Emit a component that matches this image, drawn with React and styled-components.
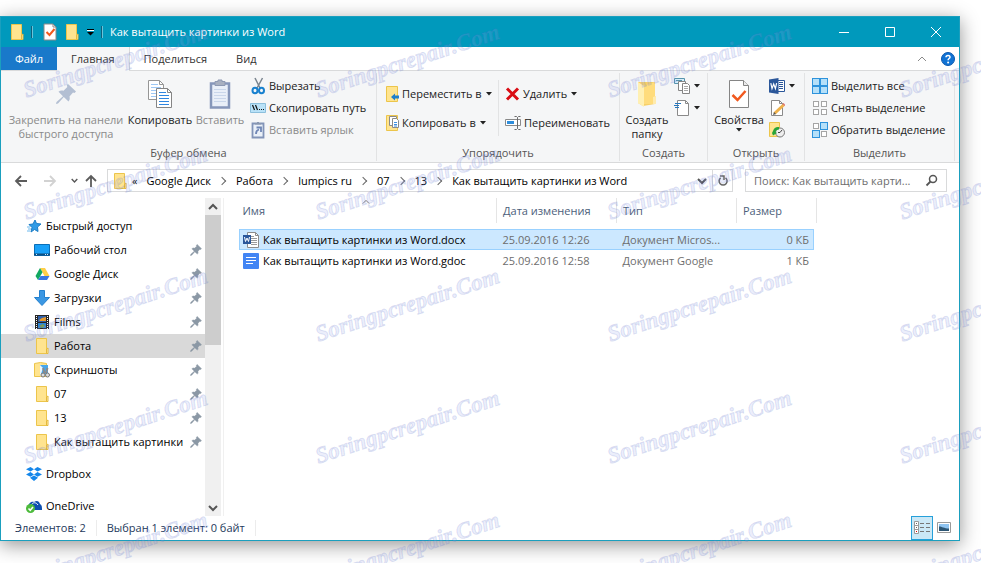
import React, { useState } from 'react';
import styled, { createGlobalStyle } from 'styled-components';

const COLORS = {
  Accent: '#0099bc',
  File: '#1979ca',
  Ribbon: '#f5f6f7',
  Line: '#d9dadb',
  Text: '#222',
  Muted: '#8a8a8a',
  Header: '#4c607a',
  Grey: '#6d6d6d',
  Status: '#1e395b',
  Selected: '#cce8ff',
  SelectedBorder: '#99d1ff',
};

const GlobalStyle = createGlobalStyle`
  * {
    box-sizing: border-box;
  }

  body {
    margin: 0;
    background: #fff;
    font-family: 'Open Sans', 'Noto Sans', sans-serif;
    font-size: 11px;
    line-height: 16px;
    color: ${COLORS.Text};
  }

  button,
  input {
    font: inherit;
    color: inherit;
    border: 0;
    background: none;
    padding: 0;
    margin: 0;
  }

  svg {
    display: block;
    flex: none;
  }
`;

const Desktop = styled.div`
  position: relative;
  display: flex;
  min-height: 100vh;
  padding: 16px 21px 22px 0;
  overflow: hidden;
`;

const Window = styled.div`
  flex: 1;
  min-width: 0;
  display: flex;
  flex-direction: column;
  background: #fff;
  border: 1px solid #1a9fbe;
  box-shadow: 0 4px 18px rgba(0, 0, 0, 0.42);
`;

const TitleBar = styled.header`
  display: flex;
  align-items: center;
  height: 30px;
  padding-left: 8px;
  background: ${COLORS.Accent};
  color: #fff;
`;

const QuickTools = styled.div`
  display: flex;
  align-items: center;
  gap: 6px;
  margin-right: 4px;
`;

const QuickButton = styled.button`
  display: flex;
`;

const QuickDivider = styled.span`
  width: 1px;
  height: 12px;
  margin-right: 4px;
  background: #0b5f7c;
  box-shadow: 1px 0 0 #6cc3d8;
`;

const Title = styled.h1`
  flex: 1;
  margin: 0;
  font-size: 11px;
  font-weight: 400;
`;

const WindowButton = styled.button`
  display: flex;
  align-items: center;
  justify-content: center;
  width: 46px;
  height: 30px;
`;

const TabBar = styled.nav`
  display: flex;
  align-items: stretch;
  height: 24px;
  border-bottom: 1px solid ${COLORS.Line};
`;

const FileTab = styled.button`
  width: 56px;
  height: 23px;
  background: ${COLORS.File};
  color: #fff;
`;

const Tab = styled.button`
  height: 24px;
  padding: 0 14px;
  color: #333;
  border-right: 1px solid ${({ $active }) => ($active ? COLORS.Line : 'transparent')};
  background: ${({ $active }) => ($active ? COLORS.Ribbon : 'none')};
`;

const TabTools = styled.div`
  display: flex;
  align-items: center;
  gap: 14px;
  margin-left: auto;
  padding-right: 4px;
`;

const Ribbon = styled.div`
  display: flex;
  height: 92px;
  padding: 2px 0 1px;
  background: ${COLORS.Ribbon};
  border-bottom: 1px solid ${COLORS.Line};
`;

const Group = styled.section`
  display: flex;
  flex-direction: column;
  justify-content: space-between;
  flex: 0 0 ${({ $width }) => $width}px;
  border-right: 1px solid #e2e3e4;
`;

const GroupBody = styled.div`
  display: flex;
  padding: 2px 0 0 ${({ $inset }) => $inset || 4}px;
`;

const GroupTitle = styled.h2`
  margin: 0;
  font-size: 11px;
  font-weight: 400;
  text-align: center;
  color: #555;
`;

const BigButton = styled.button`
  display: flex;
  flex-direction: column;
  align-items: center;
  width: ${({ $width }) => $width}px;
  line-height: 14px;
  white-space: nowrap;
  color: ${({ disabled }) => (disabled ? COLORS.Muted : COLORS.Text)};
`;

const BigIcon = styled.span`
  display: flex;
  align-items: center;
  justify-content: center;
  height: 38px;
`;

const Commands = styled.div`
  display: flex;
  flex-direction: column;
  justify-content: ${({ $spaced }) => ($spaced ? 'center' : 'flex-start')};
  gap: ${({ $spaced }) => ($spaced ? 7 : 0)}px;
  height: 66px;
  min-width: ${({ $width }) => $width || 0}px;
  padding: 0 ${({ $padding }) => $padding || 0}px;
`;

const Command = styled.button`
  display: flex;
  align-items: center;
  gap: 3px;
  height: 22px;
  white-space: nowrap;
  color: ${({ disabled }) => (disabled ? COLORS.Muted : COLORS.Text)};
`;

const InnerDivider = styled.span`
  width: 1px;
  height: 56px;
  margin-top: 5px;
  background: #e2e3e4;
`;

const AddressRow = styled.div`
  display: flex;
  align-items: center;
  height: 35px;
  padding: 0 12px 0 11px;
`;

const NavButton = styled.button`
  display: flex;
  align-items: center;
  justify-content: center;
  width: ${({ $width }) => $width}px;
  height: 22px;
`;

const AddressBox = styled.div`
  flex: 1;
  display: flex;
  align-items: center;
  height: 23px;
  margin-left: 3px;
  padding-left: 4px;
  border: 1px solid ${COLORS.Line};
  color: #000;
`;

const Crumbs = styled.ol`
  flex: 1;
  display: flex;
  align-items: center;
  margin: 0;
  padding: 0 0 0 4px;
  list-style: none;
`;

const Crumb = styled.li`
  display: flex;
  align-items: center;

  &:first-child {
    margin-right: 9px;
  }

  &:nth-child(n + 3)::before {
    content: '';
    width: 5px;
    height: 5px;
    margin: 0 11px 0 8px;
    border: solid #666;
    border-width: 1px 1px 0 0;
    transform: rotate(45deg);
  }
`;

const CrumbLink = styled.a`
  color: inherit;
  text-decoration: none;
`;

const RefreshButton = styled(NavButton)`
  border-left: 1px solid ${COLORS.Line};
`;

const SearchBox = styled.label`
  display: flex;
  align-items: center;
  width: 202px;
  height: 23px;
  margin-left: 12px;
  padding: 0 8px;
  border: 1px solid ${COLORS.Line};
`;

const SearchInput = styled.input`
  flex: 1;
  min-width: 0;
  text-overflow: ellipsis;
  outline: none;

  &::placeholder {
    color: ${COLORS.Grey};
    opacity: 1;
  }
`;

const Content = styled.div`
  flex: 1;
  display: flex;
  min-height: 200px;
`;

const Sidebar = styled.nav`
  width: 204px;
  height: 0;
  min-height: 100%;
  padding-top: 16px;
  overflow: hidden;
  color: #000;
`;

const Tree = styled.ul`
  margin: 0 0 8px;
  padding: 0;
  list-style: none;
`;

const TreeItem = styled.a`
  display: flex;
  align-items: center;
  gap: 3px;
  height: 24px;
  padding: 0 3px 0 ${({ $level }) => ($level ? 32 : 24)}px;
  white-space: nowrap;
  color: inherit;
  text-decoration: none;
  background: ${({ $current }) => ($current ? '#d9d9d9' : 'none')};
`;

const TreeLabel = styled.span`
  flex: 1;
`;

const ScrollTrack = styled.div`
  display: flex;
  flex-direction: column;
  width: 16px;
  background: #f0f0f0;
`;

const ScrollButton = styled.button`
  display: flex;
  align-items: center;
  justify-content: center;
  height: 17px;
`;

const ScrollThumb = styled.div`
  height: 130px;
  margin-bottom: auto;
  background: #cdcdcd;
`;

const Files = styled.main`
  flex: 1;
  margin-left: 2px;
  padding-left: 15px;
  border-left: 1px solid #f0f0f0;
`;

const FileTable = styled.table`
  width: 577px;
  table-layout: fixed;
  border-collapse: collapse;
`;

const HeadCell = styled.th`
  height: 25px;
  padding: 0 6px 0 ${({ $sorted }) => ($sorted ? 3 : 6)}px;
  font-weight: 400;
  text-align: left;
  color: ${COLORS.Header};
  border-right: 1px solid #e5e5e5;
`;

const HeadInner = styled.span`
  display: grid;
  grid-template-columns: 1fr 8px 1fr;
  align-items: center;
  height: 25px;

  svg {
    align-self: start;
  }
`;

const GapRow = styled.tr`
  height: 6px;
`;

const FileRow = styled.tr`
  height: 21px;
  cursor: default;
`;

const Cell = styled.td`
  height: 21px;
  padding: 0 6px;
  overflow: hidden;
  white-space: nowrap;
  text-overflow: ellipsis;
  text-align: ${({ $right }) => ($right ? 'right' : 'left')};
  color: ${COLORS.Grey};
  background: ${({ $selected }) => ($selected ? COLORS.Selected : 'none')};
  box-shadow: ${({ $selected }) =>
    $selected
      ? `inset 0 1px 0 ${COLORS.SelectedBorder}, inset 0 -1px 0 ${COLORS.SelectedBorder}`
      : 'none'};

  &:first-child {
    padding: 0 3px;
    border-left: 1px solid ${({ $selected }) => ($selected ? COLORS.SelectedBorder : 'transparent')};
  }

  &:last-child {
    padding: 0 4px;
    border-right: 1px solid ${({ $selected }) => ($selected ? COLORS.SelectedBorder : 'transparent')};
  }
`;

const FileName = styled.span`
  display: flex;
  align-items: center;
  gap: 4px;
  color: #000;
`;

const StatusBar = styled.footer`
  display: flex;
  align-items: center;
  height: 24px;
  padding: 0 4px;
  color: ${COLORS.Status};
`;

const StatusText = styled.span`
  padding: 0 10px;
  border-right: 1px solid #ececec;
`;

const ViewButtons = styled.div`
  display: flex;
  margin-left: auto;
`;

const ViewButton = styled.button`
  display: flex;
  align-items: center;
  justify-content: center;
  width: 22px;
  height: 24px;
  border: 1px solid ${({ $active }) => ($active ? '#26a0da' : 'transparent')};
  background: ${({ $active }) => ($active ? '#cbe8f6' : 'none')};
`;

const Stamps = styled.div`
  position: absolute;
  inset: 0;
  display: grid;
  grid-template-columns: repeat(4, 292px);
  grid-auto-rows: 122px;
  padding: 91px 0 0 24px;
  overflow: hidden;
  pointer-events: none;
`;

const Stamp = styled.span`
  height: 0;
  font: italic 700 23px/0 'Liberation Serif', serif;
  white-space: nowrap;
  color: rgba(150, 165, 235, 0.2);
  -webkit-text-stroke: 1px rgba(80, 100, 190, 0.17);
  transform: rotate(-18deg);
  transform-origin: 0 0;
`;

const FolderIcon = () => (
  <svg width="16" height="18" viewBox="0 0 16 18">
    <path d="M2.500 1.500h10v12h1v3h-11z" fill="#ffe48f" stroke="#ecc54b" />
    <path d="M12.500 12l1.500-1v5.500h-1.500z" fill="#fff0b5" stroke="#e5b93c" />
  </svg>
);

const TaskIcon = () => (
  <svg width="16" height="18" viewBox="0 0 16 18">
    <path d="M2 1h9l3 3v13H2z" fill="#fff" stroke="#8a8a8a" />
    <path d="M11 1v3h3" fill="none" stroke="#8a8a8a" />
    <path d="M4.500 9l3 3 5-6" fill="none" stroke="#f15a1e" strokeWidth="2" />
  </svg>
);

const QuickMenuIcon = () => (
  <svg width="9" height="10" viewBox="0 0 9 10">
    <path d="M1 2h7v1H1z" fill="#000" />
    <path d="M1 3h7v1H1z" fill="#fff" />
    <path d="M1 5h7L4.500 8.500z" fill="#000" />
  </svg>
);

const Caret = () => (
  <svg width="8" height="6" viewBox="0 0 8 6">
    <path d="M1 1h6L4 4.500z" fill="#222" />
  </svg>
);

const Chevron = ({ up, size = 10, color = '#555', weight = 1 }) => (
  <svg width={size} height={size} viewBox="0 0 10 10">
    <path d={up ? 'M1 7l4-4 4 4' : 'M1 3l4 4 4-4'} fill="none" stroke={color} strokeWidth={weight} />
  </svg>
);

const HelpIcon = () => (
  <svg width="14" height="14" viewBox="0 0 14 14">
    <circle cx="7" cy="7" r="6.500" fill="#1173d4" stroke="#0a57ad" />
    <path d="M5 5.300C5 2.700 9.200 2.800 9 5.200 8.900 6.600 7.100 6.500 7.100 8.300" fill="none" stroke="#fff" strokeWidth="1.500" />
    <circle cx="7.100" cy="10.400" r="1" fill="#fff" />
  </svg>
);

const BigPinIcon = () => (
  <svg width="22" height="22" viewBox="0 0 22 22">
    <path
      d="M13 1l8 7.500-1.500 1.500-1.500-.5-3.500 4c.5 2 .3 3.500-1 5L8.800 14 3 20.500 1 21l.5-2L8 13.200 3.500 8.700c1.500-1.300 3-1.500 5-1L12.300 4 11.800 2.200z"
      fill="#b3bfd3"
    />
  </svg>
);

const PinIcon = () => (
  <svg width="12" height="12" viewBox="0 0 22 22">
    <path
      d="M13 1l8 7.500-1.500 1.500-1.500-.5-3.500 4c.5 2 .3 3.500-1 5L8.800 14 3 20.500 1 21l.5-2L8 13.200 3.500 8.700c1.500-1.300 3-1.500 5-1L12.300 4 11.800 2.200z"
      fill="#8b98a5"
      stroke="#8b98a5"
    />
  </svg>
);

const CopyIcon = () => (
  <svg width="26" height="30" viewBox="0 0 26 30">
    <path d="M1.500 1.500h11l4 4v15h-15z" fill="#fff" stroke="#969696" />
    <path d="M12.500 1.500v4h4" fill="none" stroke="#969696" />
    <path d="M4 5.500h7M4 8.500h10M4 11.500h10M4 14.500h10M4 17.500h10" stroke="#9ec8f5" />
    <path d="M9.500 9.500h11l4 4v15h-15z" fill="#fff" stroke="#858585" />
    <path d="M20.500 9.500v4h4" fill="none" stroke="#858585" />
    <path d="M12 13.500h7M12 16.500h10M12 19.500h10M12 22.500h10M12 25.500h10" stroke="#2f86e0" />
  </svg>
);

const PasteIcon = () => (
  <svg width="22" height="30" viewBox="0 0 22 30">
    <path d="M2 4.500h18v24H2z" fill="#e9eff8" stroke="#8697ba" strokeWidth="2.500" />
    <path d="M5 10.500h12M5 13.500h12M5 16.500h12M5 19.500h12M5 22.500h12" stroke="#c9d6ea" />
    <path d="M6 6.500v-4h3V1h4v1.500h3v4z" fill="#a8b0c0" stroke="#8d99b3" />
  </svg>
);

const CutIcon = () => (
  <svg width="16" height="18" viewBox="0 0 16 18">
    <path d="M5 1l5.500 11M12.500 1L6.500 12" stroke="#7a858f" strokeWidth="1.500" fill="none" />
    <ellipse cx="5" cy="13.500" rx="2.500" ry="2.800" fill="none" stroke="#1881cf" strokeWidth="2" />
    <ellipse cx="11.500" cy="13.500" rx="2.500" ry="2.800" fill="none" stroke="#1881cf" strokeWidth="2" />
  </svg>
);

const PathIcon = () => (
  <svg width="16" height="16" viewBox="0 0 16 16">
    <path d="M.5 3.500h15v9H.5z" fill="#b9e2f8" stroke="#8cbfdc" />
    <path d="M2.500 5l2 5M5.500 5l2 5M9 9.500h1M11 9.500h1M13 9.500h1" stroke="#111" strokeWidth="1.200" />
  </svg>
);

const ShortcutIcon = () => (
  <svg width="16" height="18" viewBox="0 0 16 18">
    <path d="M2.500 2.500h11v14h-11z" fill="#eaf0f8" stroke="#8294b8" strokeWidth="1.800" />
    <path d="M5 3.500V2h2V1h2v1h2v1.500z" fill="#8997b0" />
    <path d="M6 13c0-2.500 1-4 3-4.500M6.500 6.500H11V11" fill="none" stroke="#6f86b5" strokeWidth="1.800" />
  </svg>
);

const MoveIcon = () => (
  <svg width="14" height="18" viewBox="0 0 14 18">
    <path d="M1.500 1.500h11v15h-11z" fill="#ffe48f" stroke="#ecc54b" />
    <path d="M6 12l4-3.500v2h4v3h-4v2z" fill="#1f7fcb" />
  </svg>
);

const CopyToIcon = () => (
  <svg width="14" height="18" viewBox="0 0 14 18">
    <path d="M1.500 1.500h11v15h-11z" fill="#ffe48f" stroke="#ecc54b" />
    <path d="M4.500 2.500h7v9h-7z" fill="#fff" stroke="#8a8a8a" />
    <path d="M7.500 4.500h4l2 2v7h-6z" fill="#fff" stroke="#8a8a8a" />
    <path d="M9 8.500h3M9 10.500h3M9 12h3" stroke="#3f8fe0" />
  </svg>
);

const DeleteIcon = () => (
  <svg width="15" height="16" viewBox="0 0 15 16">
    <path d="M2 2.500l11 11M13 2.500L2 13.500" stroke="#d90d14" strokeWidth="3" />
  </svg>
);

const RenameIcon = () => (
  <svg width="16" height="16" viewBox="0 0 16 16">
    <path d="M.5 4.500h15v6H.5z" fill="#fff" stroke="#8a8a8a" />
    <path d="M2 6h7v3H2z" fill="#2e8ddb" />
    <path d="M9.500 1.500h2l1 1 1-1h2M12.500 2.500v11M9.500 14.500h2l1-1 1 1h2" fill="none" stroke="#6b6b6b" />
  </svg>
);

const NewFolderIcon = () => (
  <svg width="22" height="30" viewBox="0 0 22 30">
    <path d="M2 3h17v22l-12 2-5-3z" fill="#f7d067" />
    <path d="M2 3l6 4v21l-6-4z" fill="#fff0b3" />
    <path d="M8 7l11-4v14l1 1v7H8z" fill="#ffdc7c" />
    <path d="M17 18l3-1v8h-3z" fill="#ffebad" />
  </svg>
);

const NewItemIcon = () => (
  <svg width="16" height="18" viewBox="0 0 16 18">
    <path d="M.5 1.500h10v5h-10z" fill="#d5eefb" stroke="#5794ad" />
    <path d="M2 3.500h6" stroke="#5794ad" />
    <path d="M4.500 4.500h7v9h-7z" fill="#fff" stroke="#858585" />
    <path d="M8.500 6.500h5l2 2v8h-7z" fill="#fff" stroke="#858585" />
    <path d="M10 9.500h4M10 11.500h4M10 13.500h4" stroke="#a8a8a8" />
  </svg>
);

const EasyAccessIcon = () => (
  <svg width="16" height="18" viewBox="0 0 16 18">
    <path d="M3.500 1.500h8l3 3v12h-11z" fill="#fff" stroke="#8a8a8a" />
    <path d="M11.500 1.500v3h3" fill="none" stroke="#8a8a8a" />
    <path d="M1 4.500h6M0 6.500h5M1 8.500h4" stroke="#2677bd" />
  </svg>
);

const PropertiesIcon = () => (
  <svg width="22" height="30" viewBox="0 0 22 30">
    <path d="M1.500 1.500h14l5 5v22h-19z" fill="#fff" stroke="#858585" />
    <path d="M15.500 1.500v5h5" fill="#ececec" stroke="#858585" />
    <path d="M4.500 16l5 5 8-9" fill="none" stroke="#f1591f" strokeWidth="2.500" />
  </svg>
);

const WordIcon = () => (
  <svg width="16" height="16" viewBox="0 0 16 16">
    <path d="M8.500 2.500h7v11h-7z" fill="#fff" stroke="#2b579a" />
    <path d="M10 4.500h4M10 6.500h4M10 8.500h4M10 10.500h4" stroke="#2b579a" />
    <path d="M0 1.500L9.500 0v16L0 14.500z" fill="#2b579a" />
    <path d="M1.800 5.200l1.200 5.500 1.700-4.700 1.700 4.700 1.200-5.500" fill="none" stroke="#fff" strokeWidth="1.200" />
  </svg>
);

const EditIcon = () => (
  <svg width="16" height="18" viewBox="0 0 16 18">
    <path d="M2.500 1.500h8l3 3v12h-11z" fill="#fff" stroke="#8a8a8a" />
    <path d="M10.500 1.500v3h3" fill="none" stroke="#8a8a8a" />
    <path d="M5.500 14.500l9-8.500" stroke="#eeb14b" strokeWidth="3" />
    <path d="M4 16l1-3 2 2z" fill="#555" />
    <path d="M14 4.500l2 2" stroke="#dd6a62" strokeWidth="1.500" />
  </svg>
);

const HistoryIcon = () => (
  <svg width="16" height="18" viewBox="0 0 16 18">
    <path d="M.5 1.500h10v14H.5z" fill="#ffe48f" stroke="#ecc54b" />
    <circle cx="11" cy="11.500" r="4.500" fill="#eee" stroke="#777" />
    <path d="M11 11.500l2-2.500M11 11.500h-2" stroke="#444" />
    <path d="M3 12l1-2c1-3 3-4.500 6-4v2.500c-2 0-3 1-3.500 2.500l1.500 1-4 2.500z" fill="#28a536" />
  </svg>
);

const SelectIcon = ({ filled }) => (
  <svg width="16" height="16" viewBox="0 0 16 16">
    {[[0, 0], [8, 0], [0, 8], [8, 8]].map(([x, y], i) => {
      const on = filled.includes(i);
      return (
        <rect
          key={i}
          x={x + (on ? 0.5 : 1.5)}
          y={y + (on ? 0.5 : 1.5)}
          width={on ? 7 : 5}
          height={on ? 7 : 5}
          fill={on ? '#b5e0f9' : '#fff'}
          stroke={on ? '#2e93dc' : '#a5a5a5'}
        />
      );
    })}
  </svg>
);

const ArrowIcon = ({ rotate = 0, color = '#5c5c5c' }) => (
  <svg width="14" height="14" viewBox="0 0 14 14">
    <path d="M13 7H2M7 2L2 7l5 5" fill="none" stroke={color} strokeWidth="1.800" transform={`rotate(${rotate} 7 7)`} />
  </svg>
);

const RefreshIcon = () => (
  <svg width="12" height="12" viewBox="0 0 12 12">
    <path d="M8.500 2.800a4 4 0 1 1-4.800 0" fill="none" stroke="#666" strokeWidth="1.500" />
    <path d="M3 1h4v4" fill="none" stroke="#666" strokeWidth="1.500" />
  </svg>
);

const SearchIcon = () => (
  <svg width="13" height="13" viewBox="0 0 13 13">
    <circle cx="8" cy="5" r="3.500" fill="none" stroke="#555" strokeWidth="1.500" />
    <path d="M5.500 7.500l-4 4" stroke="#555" strokeWidth="1.800" />
  </svg>
);

const StarIcon = () => (
  <svg width="18" height="16" viewBox="0 0 18 16">
    <path d="M10 2l1.500 3.500 4.500.5-3.500 3 .5 4.500-3.500-2L6 14l1-4.500L4 6.500l4-.5z" fill="#2f9be6" stroke="#1b7dc6" />
    <path d="M2 9h3M3 11h3M2 13h3" stroke="#6db9ee" />
  </svg>
);

const DesktopIcon = () => (
  <svg width="18" height="16" viewBox="0 0 18 16">
    <path d="M1.500 2.500h15v11h-15z" fill="#18a0f8" stroke="#0a6fb8" />
    <path d="M1 12.500h16" stroke="#0c4f82" strokeWidth="2" />
    <path d="M3 12.500h1M12 12.500h1M14 12.500h1" stroke="#cfeaff" />
  </svg>
);

const DriveIcon = () => (
  <svg width="18" height="16" viewBox="0 0 18 16">
    <path d="M7 2h5l4.500 8h-5z" fill="#ffcf48" />
    <path d="M7 2l2.500 4.300L5 14l-2.500-4z" fill="#11a861" />
    <path d="M7.500 10h9L14 14H5z" fill="#3777e3" />
  </svg>
);

const DownloadIcon = () => (
  <svg width="18" height="18" viewBox="0 0 18 18">
    <path d="M6.500 1.500h5v7h5L9 16.500 1.500 8.500h5z" fill="#3b97e3" stroke="#2380ce" />
  </svg>
);

const FilmIcon = () => (
  <svg width="18" height="16" viewBox="0 0 18 16">
    <path d="M2 1h14v14H2z" fill="#252525" />
    <path d="M5 2h8v6H5z" fill="#2f5fa8" />
    <path d="M5 9h8v5H5z" fill="#2d86d8" />
    <path d="M6 6l3-2 4-1v4H7z" fill="#e79a2d" />
    <path d="M6 12l4-2 2 2-3 2z" fill="#7fa13c" />
    <path d="M3.500 2v13M14.500 2v13" stroke="#fff" strokeDasharray="1 1" />
  </svg>
);

const ScreenshotsIcon = () => (
  <svg width="18" height="18" viewBox="0 0 18 18">
    <path d="M1.500 2.500l6-1 6 1v13h-12z" fill="#ffe48f" stroke="#ecc54b" />
    <path d="M7 4h8v9H7z" fill="#49a7ea" />
    <path d="M7 4l3 3-3 9z" fill="#e9f5fd" />
    <path d="M10 7l1.500 5M14.500 7L13 12" stroke="#8a8a8a" strokeWidth="2" />
    <circle cx="10" cy="14" r="2" fill="#ddd" stroke="#777" />
    <circle cx="14.500" cy="14" r="2" fill="#ddd" stroke="#777" />
  </svg>
);

const DropboxIcon = () => (
  <svg width="18" height="16" viewBox="0 0 18 16">
    <path
      d="M5.500 1L9 3.300 5.500 5.600 1 3.300zM12.500 1L17 3.300l-4.500 2.300L9 3.300zM5.500 6.100L9 8.400l-3.500 2.300L1 8.400zM12.500 6.100L17 8.400l-4.500 2.300L9 8.400zM5 11.800L9 9.600l4 2.200L9 15z"
      fill="#1486ea"
    />
  </svg>
);

const OneDriveIcon = () => (
  <svg width="18" height="16" viewBox="0 0 18 16">
    <path d="M3 10c0-4 3-7 6-6 3-2 5-1 6 2 2 1 2 3 2 6H6z" fill="#0d4fb0" />
    <path d="M6 7c2-3 5-3 7 0" fill="none" stroke="#fff" />
    <circle cx="5.500" cy="10.500" r="4.500" fill="#4dbb3c" />
    <path d="M3.500 10.500l1.700 1.800 2.800-3.300" fill="none" stroke="#fff" strokeWidth="1.500" />
  </svg>
);

const DocxIcon = () => (
  <svg width="16" height="16" viewBox="0 0 16 16">
    <path d="M4.500.5h8l3 3v12h-11z" fill="#fff" stroke="#8c8c8c" />
    <path d="M12.500.5v3h3" fill="none" stroke="#8c8c8c" />
    <path d="M8 4.500h3M8 6.500h6M8 8.500h6M8 10.500h6M8 12.500h6" stroke="#9a9a9a" />
    <path d="M0 3h8v9H0z" fill="#2b579a" />
    <path d="M1.500 5l1 4.500L4 6l1.500 3.500 1-4.500" fill="none" stroke="#fff" />
  </svg>
);

const GdocIcon = () => (
  <svg width="16" height="16" viewBox="0 0 16 16">
    <rect width="16" height="16" rx="1" fill="#4285f4" />
    <path d="M3 4.500h10M3 7.500h10M3 10.500h7" stroke="#fff" />
  </svg>
);

const DetailsIcon = () => (
  <svg width="16" height="14" viewBox="0 0 16 14">
    <path d="M.5.500h4v12h-4zM.5 4.500h4M.5 8.500h4" fill="#fff" stroke="#9a9a9a" />
    <path d="M2 2.500h1M2 6.500h1" stroke="#666" />
    <path d="M2 10.500h1" stroke="#d00" />
    <path d="M6 2.500h4M12 2.500h4M6 6.500h4M12 6.500h4M6 10.500h4M12 10.500h4" stroke="#777" />
  </svg>
);

const ThumbnailsIcon = () => (
  <svg width="14" height="12" viewBox="0 0 14 12">
    <path d="M.5.500h13v10H.5z" fill="#fff" stroke="#9a9a9a" />
    <path d="M2 2h10v7H2z" fill="#8fc4f1" />
    <path d="M2 4.500c3 0 5 2 10 2V9H2z" fill="#2d5674" />
  </svg>
);

const crumbs = ['Google Диск', 'Работа', 'lumpics ru', '07', '13', 'Как вытащить картинки из Word'];

const quickAccess = [
  { name: 'Рабочий стол', Icon: DesktopIcon },
  { name: 'Google Диск', Icon: DriveIcon },
  { name: 'Загрузки', Icon: DownloadIcon },
  { name: 'Films', Icon: FilmIcon },
  { name: 'Работа', Icon: FolderIcon, current: true },
  { name: 'Скриншоты', Icon: ScreenshotsIcon },
  { name: '07', Icon: FolderIcon },
  { name: '13', Icon: FolderIcon },
  { name: 'Как вытащить картинки', Icon: FolderIcon },
];

const files = [
  { name: 'Как вытащить картинки из Word.docx', date: '25.09.2016 12:26', type: 'Документ Micros...', size: '0 КБ', Icon: DocxIcon },
  { name: 'Как вытащить картинки из Word.gdoc', date: '25.09.2016 12:58', type: 'Документ Google', size: '1 КБ', Icon: GdocIcon },
];

const IconSlot = styled.span`
  display: flex;
  flex: none;
  justify-content: center;
  width: 18px;
`;

const RibbonPanel = () => (
  <Ribbon>
    <Group $width={376}>
      <GroupBody>
        <BigButton $width={122} disabled>
          <BigIcon><BigPinIcon /></BigIcon>
          Закрепить на панели
          <br />
          быстрого доступа
        </BigButton>
        <BigButton $width={66}>
          <BigIcon><CopyIcon /></BigIcon>
          Копировать
        </BigButton>
        <BigButton $width={54} disabled>
          <BigIcon><PasteIcon /></BigIcon>
          Вставить
        </BigButton>
        <Commands $padding={3}>
          <Command><CutIcon />Вырезать</Command>
          <Command><PathIcon />Скопировать путь</Command>
          <Command disabled><ShortcutIcon />Вставить ярлык</Command>
        </Commands>
      </GroupBody>
      <GroupTitle>Буфер обмена</GroupTitle>
    </Group>

    <Group $width={243}>
      <GroupBody $inset={8}>
        <Commands $spaced $width={113}>
          <Command><MoveIcon />Переместить в <Caret /></Command>
          <Command><CopyToIcon />Копировать в <Caret /></Command>
        </Commands>
        <InnerDivider />
        <Commands $spaced $padding={6}>
          <Command><DeleteIcon />Удалить <Caret /></Command>
          <Command><RenameIcon />Переименовать</Command>
        </Commands>
      </GroupBody>
      <GroupTitle>Упорядочить</GroupTitle>
    </Group>

    <Group $width={88}>
      <GroupBody>
        <BigButton $width={46}>
          <BigIcon><NewFolderIcon /></BigIcon>
          Создать
          <br />
          папку
        </BigButton>
        <Commands $padding={4}>
          <Command aria-label="Создать элемент"><NewItemIcon /><Caret /></Command>
          <Command aria-label="Простой доступ"><EasyAccessIcon /><Caret /></Command>
        </Commands>
      </GroupBody>
      <GroupTitle>Создать</GroupTitle>
    </Group>

    <Group $width={97}>
      <GroupBody>
        <BigButton $width={54}>
          <BigIcon><PropertiesIcon /></BigIcon>
          Свойства
          <Caret />
        </BigButton>
        <Commands $padding={3}>
          <Command aria-label="Открыть"><WordIcon /><Caret /></Command>
          <Command aria-label="Изменить"><EditIcon /></Command>
          <Command aria-label="Журнал"><HistoryIcon /></Command>
        </Commands>
      </GroupBody>
      <GroupTitle>Открыть</GroupTitle>
    </Group>

    <Group $width={150}>
      <GroupBody>
        <Commands $padding={3}>
          <Command><SelectIcon filled={[0, 1, 2, 3]} />Выделить все</Command>
          <Command><SelectIcon filled={[]} />Снять выделение</Command>
          <Command><SelectIcon filled={[1, 2]} />Обратить выделение</Command>
        </Commands>
      </GroupBody>
      <GroupTitle>Выделить</GroupTitle>
    </Group>
  </Ribbon>
);

const App = () => {
  const [selected, setSelected] = useState(0);

  return (
    <Desktop>
      <GlobalStyle />
      <Window>
        <TitleBar>
          <QuickTools>
            <FolderIcon />
            <QuickDivider />
            <QuickButton aria-label="Свойства"><TaskIcon /></QuickButton>
            <QuickButton aria-label="Создать папку"><FolderIcon /></QuickButton>
            <QuickButton aria-label="Настройка панели"><QuickMenuIcon /></QuickButton>
            <QuickDivider />
          </QuickTools>
          <Title>Как вытащить картинки из Word</Title>
          <WindowButton aria-label="Свернуть">
            <svg width="10" height="10"><path d="M0 5.500h10" stroke="#fff" /></svg>
          </WindowButton>
          <WindowButton aria-label="Развернуть">
            <svg width="10" height="10"><path d="M.5.500h9v9h-9z" fill="none" stroke="#fff" /></svg>
          </WindowButton>
          <WindowButton aria-label="Закрыть">
            <svg width="10" height="10"><path d="M0 0l10 10M10 0L0 10" stroke="#fff" /></svg>
          </WindowButton>
        </TitleBar>

        <TabBar>
          <FileTab>Файл</FileTab>
          <Tab $active>Главная</Tab>
          <Tab>Поделиться</Tab>
          <Tab>Вид</Tab>
          <TabTools>
            <QuickButton aria-label="Свернуть ленту"><Chevron up color="#8a8a8a" /></QuickButton>
            <QuickButton aria-label="Справка"><HelpIcon /></QuickButton>
          </TabTools>
        </TabBar>

        <RibbonPanel />

        <AddressRow>
          <NavButton $width={18} aria-label="Назад"><ArrowIcon /></NavButton>
          <NavButton $width={40} aria-label="Вперед"><ArrowIcon rotate={180} color="#d2d2d2" /></NavButton>
          <NavButton $width={8} aria-label="Последние расположения"><Chevron size={7} weight={2} /></NavButton>
          <NavButton $width={26} aria-label="Вверх"><ArrowIcon rotate={90} /></NavButton>
          <AddressBox>
            <FolderIcon />
            <Crumbs>
              <Crumb><CrumbLink href="#up">«</CrumbLink></Crumb>
              {crumbs.map((crumb, i) => (
                <Crumb key={crumb}><CrumbLink href={`#${i}`}>{crumb}</CrumbLink></Crumb>
              ))}
            </Crumbs>
            <NavButton $width={20} aria-label="Предыдущие расположения"><Chevron weight={2} /></NavButton>
            <RefreshButton $width={20} aria-label="Обновить"><RefreshIcon /></RefreshButton>
          </AddressBox>
          <SearchBox>
            <SearchInput aria-label="Поиск" placeholder="Поиск: Как вытащить карти..." />
            <SearchIcon />
          </SearchBox>
        </AddressRow>

        <Content>
          <Sidebar>
            <Tree>
              <li>
                <TreeItem href="#quick"><IconSlot><StarIcon /></IconSlot>Быстрый доступ</TreeItem>
              </li>
              {quickAccess.map(({ name, Icon, current }) => (
                <li key={name}>
                  <TreeItem href="#folder" $level={1} $current={current}>
                    <IconSlot><Icon /></IconSlot>
                    <TreeLabel>{name}</TreeLabel>
                    <PinIcon />
                  </TreeItem>
                </li>
              ))}
            </Tree>
            <Tree>
              <li><TreeItem href="#dropbox"><IconSlot><DropboxIcon /></IconSlot>Dropbox</TreeItem></li>
            </Tree>
            <Tree>
              <li><TreeItem href="#onedrive"><IconSlot><OneDriveIcon /></IconSlot>OneDrive</TreeItem></li>
            </Tree>
          </Sidebar>
          <ScrollTrack>
            <ScrollButton aria-label="Прокрутить вверх"><Chevron up weight={2} /></ScrollButton>
            <ScrollThumb />
            <ScrollButton aria-label="Прокрутить вниз"><Chevron weight={2} /></ScrollButton>
          </ScrollTrack>

          <Files>
            <FileTable>
              <colgroup>
                <col style={{ width: 257 }} />
                <col style={{ width: 120 }} />
                <col style={{ width: 120 }} />
                <col style={{ width: 77 }} />
                <col style={{ width: 3 }} />
              </colgroup>
              <thead>
                <tr>
                  <HeadCell $sorted>
                    <HeadInner>Имя<Chevron up size={8} /></HeadInner>
                  </HeadCell>
                  <HeadCell>Дата изменения</HeadCell>
                  <HeadCell>Тип</HeadCell>
                  <HeadCell colSpan={2}>Размер</HeadCell>
                </tr>
              </thead>
              <tbody>
                <GapRow />
                {files.map(({ name, date, type, size, Icon }, i) => (
                  <FileRow key={name} onClick={() => setSelected(i)}>
                    <Cell $selected={selected === i}><FileName><Icon />{name}</FileName></Cell>
                    <Cell $selected={selected === i}>{date}</Cell>
                    <Cell $selected={selected === i}>{type}</Cell>
                    <Cell $selected={selected === i} $right>{size}</Cell>
                  </FileRow>
                ))}
              </tbody>
            </FileTable>
          </Files>
        </Content>

        <StatusBar>
          <StatusText>Элементов: 2</StatusText>
          <StatusText>Выбран 1 элемент: 0 байт</StatusText>
          <ViewButtons>
            <ViewButton $active aria-label="Таблица"><DetailsIcon /></ViewButton>
            <ViewButton aria-label="Крупные значки"><ThumbnailsIcon /></ViewButton>
          </ViewButtons>
        </StatusBar>
      </Window>
      <Stamps aria-hidden="true">
        {Array.from({ length: 20 }, (_, i) => (
          <Stamp key={i}>Soringpcrepair.Com</Stamp>
        ))}
      </Stamps>
    </Desktop>
  );
};

export default App;
